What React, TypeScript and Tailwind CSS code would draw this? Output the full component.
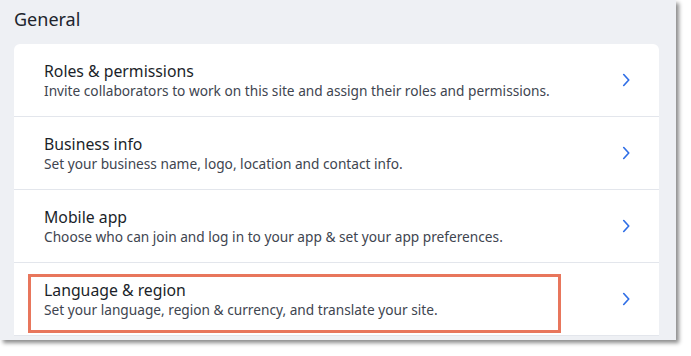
import React from "react";

const rows = [
  { t: "Roles & permissions", d: "Invite collaborators to work on this site and assign their roles and permissions." },
  { t: "Business info", d: "Set your business name, logo, location and contact info." },
  { t: "Mobile app", d: "Choose who can join and log in to your app & set your app preferences." },
  { t: "Language & region", d: "Set your language, region & currency, and translate your site.", hl: true },
];

function Chevron() {
  return (
    <svg width="22" height="22" viewBox="0 0 24 24" fill="none" stroke="#2f6ee6" strokeWidth="1.8" strokeLinecap="round" strokeLinejoin="round">
      <path d="m9.5 18 5.5-6-5.5-6" />
    </svg>
  );
}

export default function App() {
  return (
    <div className="w-[691px] h-[356px] bg-white" style={{ fontFamily: "'Noto Sans', sans-serif" }}>
      <div className="w-[676px] h-[340px] bg-[#eef0f4] shadow-[3px_3px_4px_rgba(0,0,0,0.45)] flex flex-col overflow-hidden">
        <div className="h-[44px] pl-[14px] pt-[6px] text-[18px] text-[#20242c] leading-[26px]">General</div>
        <div className="ml-[14px] w-[645px] bg-white rounded-t-[6px] flex flex-col">
          {rows.map((r, i) => (
            <div key={i} className="relative h-[73px] border-b border-[#e3e6ec] flex items-center pl-[30px] pr-[22px]">
              <div className="flex-1 flex flex-col pt-[1px]">
                <div className="text-[15.8px] leading-[20px] text-[#1b1f2a]">{r.t}</div>
                <div className="text-[13.7px] leading-[20px] text-[#40454f]">{r.d}</div>
              </div>
              <Chevron />
              {r.hl && (
                <div className="absolute left-[14px] top-[11px] w-[533px] h-[59px] border-[3px] border-[#e8765c]" />
              )}
            </div>
          ))}
        </div>
      </div>
    </div>
  );
}
